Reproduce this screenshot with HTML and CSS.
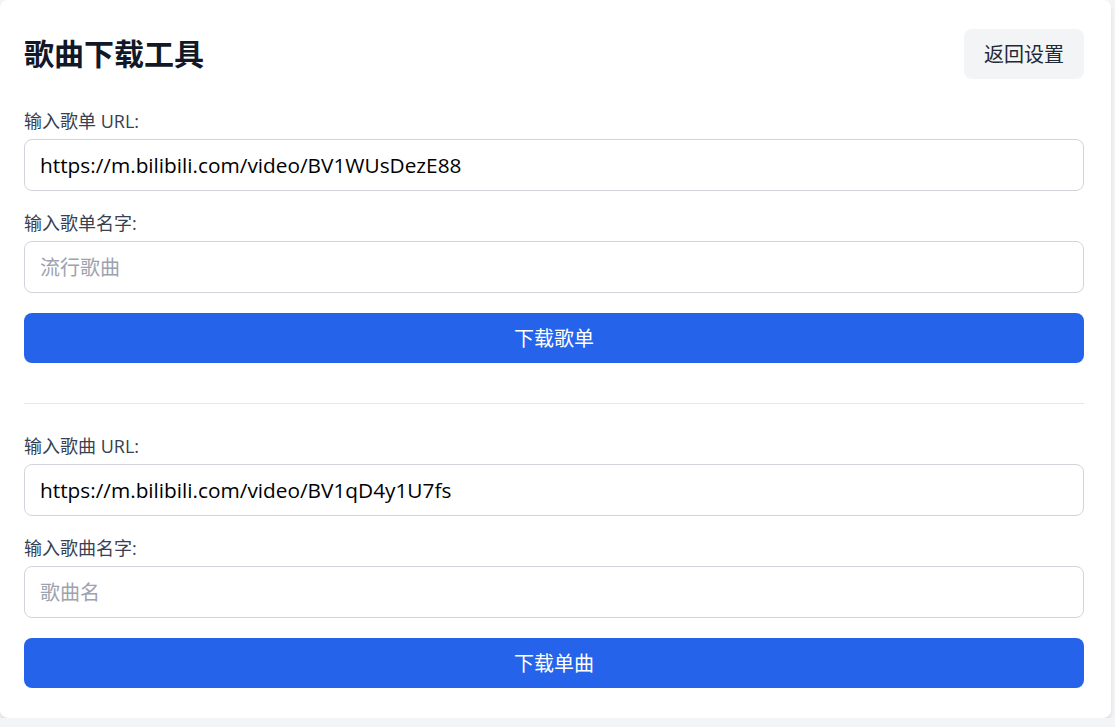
FILE: index.html
```html
<!DOCTYPE html>
<html lang="zh-CN">
<head>
<meta charset="utf-8">
<title>歌曲下载工具</title>
<link rel="stylesheet" href="styles.css">
</head>
<body>
<div class="card">
  <div class="header">
    <h1 class="title">歌曲下载工具</h1>
    <button class="back-btn">返回设置</button>
  </div>

  <div class="field">
    <label class="label">输入歌单 URL:</label>
    <input class="input" type="text" value="https://m.bilibili.com/video/BV1WUsDezE88">
  </div>
  <div class="field">
    <label class="label">输入歌单名字:</label>
    <input class="input" type="text" placeholder="流行歌曲">
  </div>
  <button class="primary-btn">下载歌单</button>

  <hr class="divider">

  <div class="field">
    <label class="label">输入歌曲 URL:</label>
    <input class="input" type="text" value="https://m.bilibili.com/video/BV1qD4y1U7fs">
  </div>
  <div class="field">
    <label class="label">输入歌曲名字:</label>
    <input class="input" type="text" placeholder="歌曲名">
  </div>
  <button class="primary-btn">下载单曲</button>
</div>
</body>
</html>
```

FILE: styles.css
```css
* { box-sizing: border-box; }

html, body {
  margin: 0;
  padding: 0;
  background: #f3f4f6;
  font-family: "Open Sans", "Noto Sans CJK SC", sans-serif;
}

body {
  padding-right: 4px;
}

.card {
  background: #ffffff;
  border-radius: 8px;
  box-shadow: 0 4px 6px -1px rgba(0, 0, 0, 0.1), 0 2px 4px -2px rgba(0, 0, 0, 0.1);
  padding: 29px 27px 30px 24px;
}

.header {
  display: flex;
  align-items: center;
  justify-content: space-between;
  height: 50px;
  margin-bottom: 30px;
}

.title {
  margin: 0;
  padding-bottom: 4px;
  font-size: 30px;
  line-height: 36px;
  font-weight: 700;
  color: #111827;
  font-family: "Noto Sans CJK SC", sans-serif;
}

.back-btn {
  border: none;
  background: #f3f4f6;
  color: #1f2937;
  font-family: "Noto Sans CJK SC", sans-serif;
  font-size: 20px;
  line-height: 28px;
  padding: 11px 20px;
  border-radius: 8px;
  cursor: pointer;
}

.field {
  display: flex;
  flex-direction: column;
  margin-bottom: 20px;
}

.label {
  font-size: 18px;
  line-height: 24px;
  color: #374151;
  margin-bottom: 6px;
}

.input {
  width: 100%;
  height: 52px;
  border: 1px solid #d1d5db;
  border-radius: 8px;
  padding: 11px 15px;
  font-family: "Open Sans", "Noto Sans CJK SC", sans-serif;
  font-size: 20.8px;
  line-height: 28px;
  color: #000000;
  background: #ffffff;
  outline: none;
}

.input::placeholder {
  color: #9ca3af;
  font-family: "Noto Sans CJK SC", sans-serif;
  font-size: 20px;
}

.primary-btn {
  display: block;
  width: 100%;
  height: 50px;
  border: none;
  border-radius: 8px;
  background: #2563eb;
  color: #ffffff;
  font-family: "Noto Sans CJK SC", sans-serif;
  font-size: 20px;
  line-height: 28px;
  cursor: pointer;
}

.divider {
  border: none;
  border-top: 1px solid #e5e7eb;
  height: 0;
  margin: 40px 0 30px 0;
}
```
